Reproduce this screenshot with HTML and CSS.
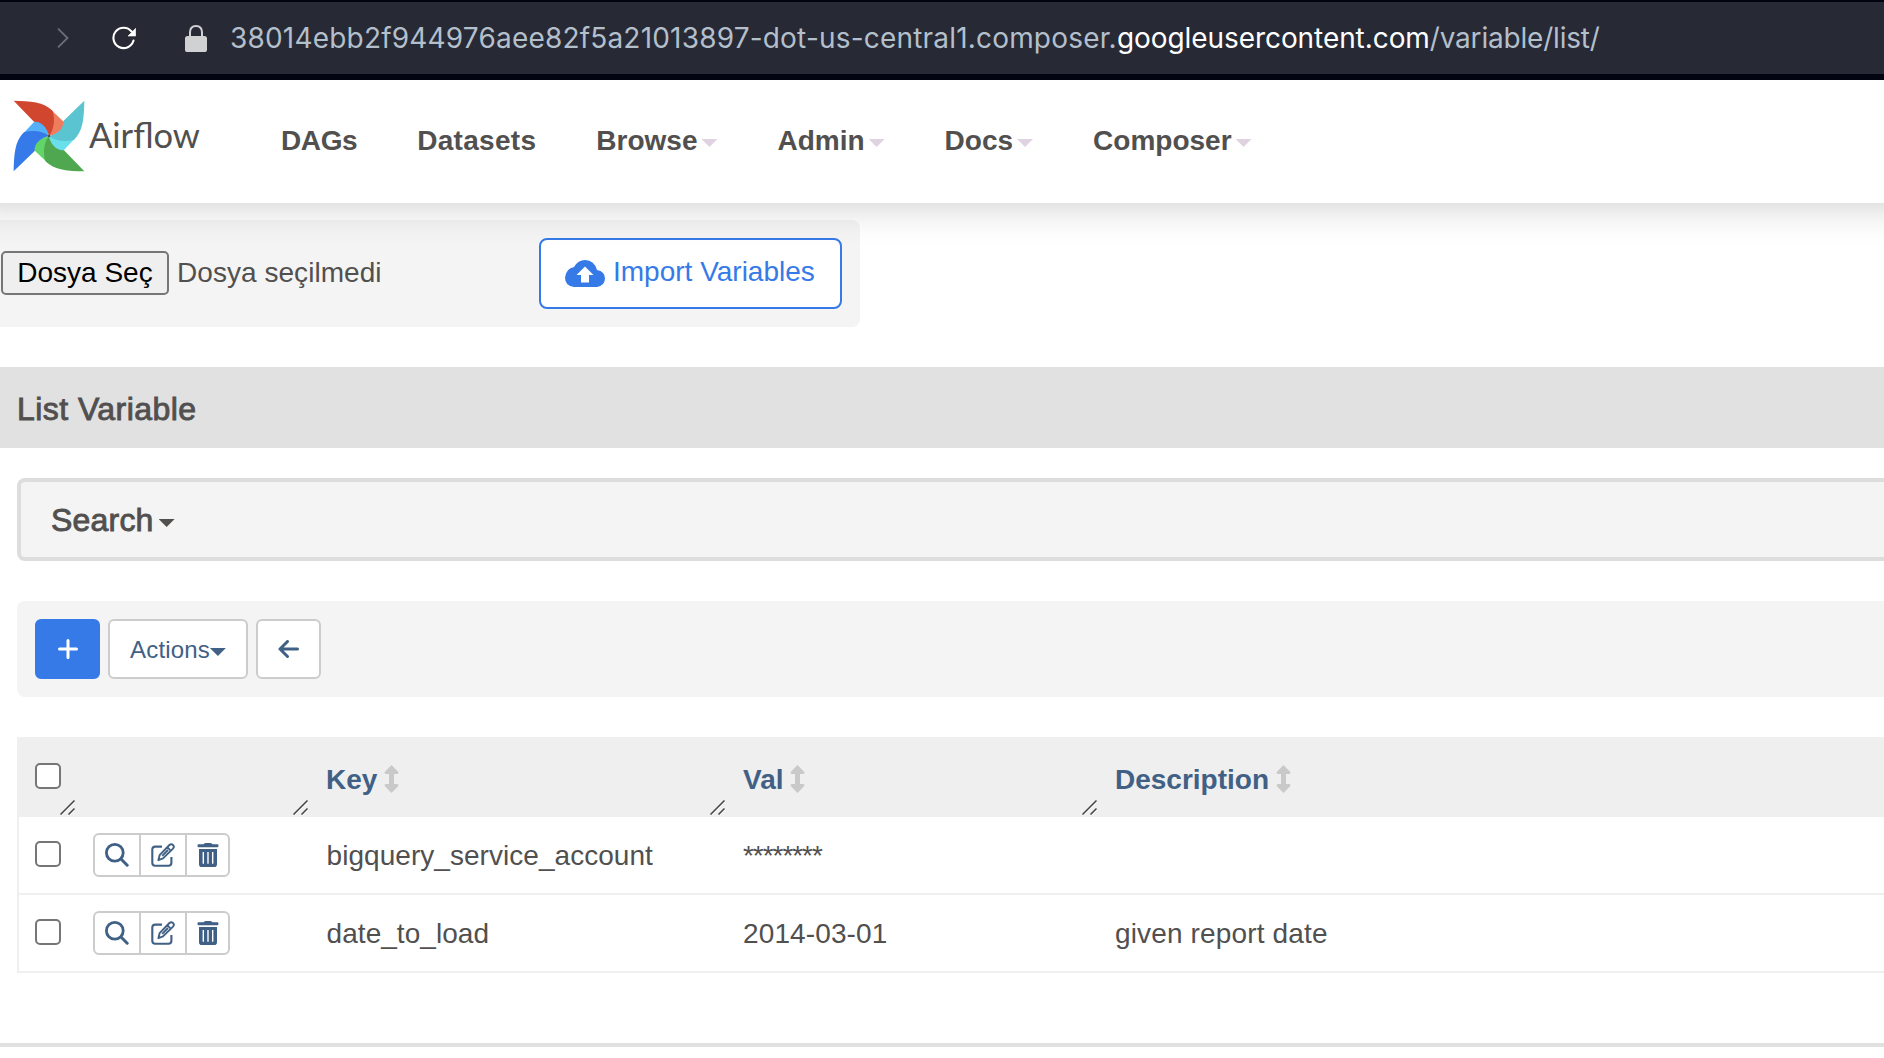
FILE: index.html
```html
<!DOCTYPE html>
<html lang="tr">
<head>
<meta charset="utf-8">
<title>List Variable - Airflow</title>
<link rel="stylesheet" href="styles.css">
</head>
<body>
<svg class="defs" aria-hidden="true">
  <symbol id="i-search" viewBox="0 0 24 24"><circle cx="9.8" cy="9.8" r="8.4" fill="none" stroke="currentColor" stroke-width="2.8"/><path d="M16 16l6.2 6.2" stroke="currentColor" stroke-width="3" stroke-linecap="round"/></symbol>
  <symbol id="i-edit" viewBox="0 0 24 24"><path d="M11 3.6H4.2Q1.3 3.6 1.3 6.5V19.8Q1.3 22.7 4.2 22.7H17.5Q20.4 22.7 20.4 19.8V14" fill="none" stroke="currentColor" stroke-width="2.1"/><path d="M7.4 17.2L8.6 12.2 18.4 2Q20.2 .4 22 2 23.700 3.800 22 5.600L12 15.400ZM16.300 4.200l3.600 3.600M11.200 12.800L17 7" fill="none" stroke="currentColor" stroke-width="1.9" stroke-linejoin="round"/></symbol>
  <symbol id="i-trash" viewBox="0 0 22 24"><path d="M1.500 1.300H6.500Q7.500 0 9 0H13Q14.500 0 15.500 1.300H20.500Q21.500 1.300 21.500 2.700T20.500 4.200H1.500Q.500 4.200 .500 2.700T1.500 1.300Z" fill="currentColor"/><path fill-rule="evenodd" d="M2 6H20V21.200Q20 24 17.200 24H4.800Q2 24 2 21.200ZM5.600 9V20.800H7V9ZM10.300 9V20.800H11.700V9ZM15 9V20.800H16.400V9Z" fill="currentColor"/></symbol>
  <symbol id="i-sort" viewBox="0 0 15 28"><path d="M7.500 0L14.300 7Q15 8.800 13 9H10V19H13Q15 19.200 14.300 21L7.500 28 .700 21Q0 19.200 2 19H5V9H2Q0 8.800 .700 7Z" fill="currentColor"/></symbol>
  <symbol id="i-grip" viewBox="0 0 15 15"><path d="M.5 14.500L14.500 .500M8.500 14.500L14.500 8.500" stroke="#444" stroke-width="1.500"/><path d="M2 15L15 2M10 15L15 10" stroke="#fff" stroke-width=".8"/></symbol>
</svg>

<header class="browser">
  <svg class="forward" viewBox="0 0 12 20"><path d="M1 .700L10.500 10 1 19.300" fill="none" stroke="#6c6e79" stroke-width="1.800"/></svg>
  <svg class="reload" viewBox="0 0 24 24"><path d="M21.500 14.500A10.200 10.200 0 1 1 19.600 5.500" fill="none" stroke="#fff" stroke-width="2.100" stroke-linecap="round"/><path d="M23.700 2.300V10H16Z" fill="#fff" stroke="#fff" stroke-width=".6"/></svg>
  <svg class="lock" viewBox="0 0 22 27"><path d="M5 13V7.500Q5 1 11 1T17 7.500V13" fill="none" stroke="#d0d1d3" stroke-width="2"/><rect y="11" width="22" height="16" rx="2.600" fill="#d0d1d3"/></svg>
  <div class="url">38014ebb2f944976aee82f5a21013897-dot-us-central1.composer.<span class="domain">googleusercontent.com</span><span class="path">/variable/list/</span></div>
</header>

<nav class="nav">
  <a class="brand">
    <svg class="pinwheel" viewBox="39 59 216 216">
      <g fill="#f07c5e"><path d="M150 85L192 125C194 150 165 165 147 167Z"/></g>
      <g transform="rotate(90 147 167)" fill="#68dfeb"><path d="M150 85L192 125C194 150 165 165 147 167Z"/></g>
      <g transform="rotate(180 147 167)" fill="#62d568"><path d="M150 85L192 125C194 150 165 165 147 167Z"/></g>
      <g transform="rotate(270 147 167)" fill="#53b0f9"><path d="M150 85L192 125C194 150 165 165 147 167Z"/></g>
      <g fill="#d0462f"><path d="M41 61C90 62 132 64 158 92C166 118 162 148 147 167C143 145 126 122 102 124Z"/></g>
      <g transform="rotate(90 147 167)" fill="#5bc4d1"><path d="M41 61C90 62 132 64 158 92C166 118 162 148 147 167C143 145 126 122 102 124Z"/></g>
      <g transform="rotate(180 147 167)" fill="#4fa850"><path d="M41 61C90 62 132 64 158 92C166 118 162 148 147 167C143 145 126 122 102 124Z"/></g>
      <g transform="rotate(270 147 167)" fill="#3679e8"><path d="M41 61C90 62 132 64 158 92C166 118 162 148 147 167C143 145 126 122 102 124Z"/></g>
      <circle cx="147" cy="167" r="4" fill="#51504f"/>
    </svg>
    <span class="brand-name">Airflow</span>
  </a>
  <ul class="menu">
    <li class="m-dags">DAGs</li>
    <li class="m-datasets">Datasets</li>
    <li class="m-browse">Browse<i class="caret"></i></li>
    <li class="m-admin">Admin<i class="caret"></i></li>
    <li class="m-docs">Docs<i class="caret"></i></li>
    <li class="m-composer">Composer<i class="caret"></i></li>
  </ul>
</nav>

<main>
  <form class="import">
    <button type="button" class="file-btn">Dosya Seç</button>
    <span class="file-status">Dosya seçilmedi</span>
    <button type="button" class="import-btn">
      <svg class="cloud" viewBox="0 0 40 27"><path fill-rule="evenodd" d="M9 27Q0 26 0 17.500Q1 8.500 9 7Q13 0 20 0Q29.500 .500 32 10Q40 11.500 40 18.500Q39.500 26 32 27ZM16 22.500H24V15H28.500L20 6.500 11.500 15H16Z" fill="currentColor"/></svg>
      <span>Import Variables</span>
    </button>
  </form>

  <h2 class="title"><span>List Variable</span></h2>

  <div class="content">
    <div class="search"><span>Search</span><i class="caret"></i></div>

    <div class="toolbar">
      <button class="btn primary"><svg class="plus" viewBox="0 0 20 20"><path d="M10 1.500V18.500M1.500 10H18.500" stroke="currentColor" stroke-width="3" stroke-linecap="round"/></svg></button>
      <button class="btn actions"><span>Actions</span><i class="caret"></i></button>
      <button class="btn back"><svg class="arrow" viewBox="0 0 21 18"><path d="M9.500 1.500L2 9l7.500 7.500M2 9H19.500" fill="none" stroke="currentColor" stroke-width="3" stroke-linecap="round" stroke-linejoin="round"/></svg></button>
    </div>

    <div class="table">
      <div class="row head">
        <div class="cell"><i class="check"></i><svg class="grip"><use href="#i-grip"/></svg></div>
        <div class="cell"><svg class="grip"><use href="#i-grip"/></svg></div>
        <div class="cell"><span class="t-key">Key</span><svg class="sort"><use href="#i-sort"/></svg><svg class="grip"><use href="#i-grip"/></svg></div>
        <div class="cell"><span class="t-val">Val</span><svg class="sort"><use href="#i-sort"/></svg><svg class="grip"><use href="#i-grip"/></svg></div>
        <div class="cell"><span class="t-desc">Description</span><svg class="sort"><use href="#i-sort"/></svg></div>
      </div>
      <div class="row">
        <div class="cell"><i class="check"></i></div>
        <div class="cell"><div class="group"><a><svg class="ic"><use href="#i-search"/></svg></a><a><svg class="ic"><use href="#i-edit"/></svg></a><a><svg class="ic trash"><use href="#i-trash"/></svg></a></div></div>
        <div class="cell"><span class="t-bq">bigquery_service_account</span></div>
        <div class="cell"><span class="t-stars">********</span></div>
        <div class="cell"></div>
      </div>
      <div class="row">
        <div class="cell"><i class="check"></i></div>
        <div class="cell"><div class="group"><a><svg class="ic"><use href="#i-search"/></svg></a><a><svg class="ic"><use href="#i-edit"/></svg></a><a><svg class="ic trash"><use href="#i-trash"/></svg></a></div></div>
        <div class="cell"><span class="t-load">date_to_load</span></div>
        <div class="cell"><span class="t-date">2014-03-01</span></div>
        <div class="cell"><span class="t-given">given report date</span></div>
      </div>
    </div>
  </div>
</main>
<footer class="footer"></footer>
</body>
</html>
```

FILE: styles.css
```css
* { box-sizing: border-box; }
body {
  margin: 0;
  height: 1058px;
  overflow: hidden;
  background: #fff;
  color: #51504f;
  font: 28px/40px "Liberation Sans", Arial, sans-serif;
  white-space: nowrap;
}
.defs { position: absolute; width: 0; height: 0; }
button { font: inherit; margin: 0; padding: 0; }
.caret {
  display: block;
  width: 16px;
  height: 8px;
  background: currentColor;
  clip-path: polygon(0 0, 100% 0, 50% 100%);
}

/* Browser bar */
.browser {
  position: relative;
  z-index: 2;
  height: 80px;
  display: flex;
  align-items: center;
  background: #272935;
  border-top: 2px solid #020412;
  border-bottom: 6px solid #020412;
}
.forward { width: 12px; height: 20px; margin-left: 57px; }
.reload { width: 24px; height: 24px; margin-left: 43px; }
.lock { width: 22px; height: 27px; margin: 0 23px 0 49px; }
.url {
  font: 400 28px/40px Inter, sans-serif;
  color: #b3bfcb;
  letter-spacing: .19px;
}
.domain { color: #fff; letter-spacing: -.07px; }
.path { letter-spacing: -.2px; }

/* Navigation */
.nav {
  position: relative;
  z-index: 1;
  height: 123px;
  display: flex;
  background: #fff;
  box-shadow: 0 -40px 38px 40px rgba(0, 0, 0, .22);
}
.brand { width: 281px; display: flex; padding: 20px 0 0 13px; }
.pinwheel { width: 72px; height: 72px; }
.brand-name { font: 34.5px/40px Lato, sans-serif; margin: 15px 0 0 4px; }
.menu {
  display: flex;
  gap: 60px;
  margin: 0;
  padding: 40px 0 0;
  list-style: none;
  font-weight: 700;
}
.menu li { display: flex; height: 40px; line-height: 41px; }
.menu .caret { color: #dfd2e1; margin: 19px 0 0 4px; }
.m-dags { letter-spacing: -.4px; }
.m-datasets { letter-spacing: .3px; }

/* Import form */
.import {
  width: 860px;
  height: 107px;
  margin-top: 17px;
  padding: 18px 18px 18px 1px;
  display: flex;
  align-items: center;
  background: #f4f4f4;
  border-radius: 0 8px 8px 0;
}
.file-btn {
  width: 168px;
  height: 44px;
  margin-bottom: 2px;
  border: 2px solid #767676;
  border-radius: 5px;
  background: #efefef;
  color: #000;
  line-height: 38px;
}
.file-status { margin: 0 0 2px 8px; letter-spacing: .05px; }
.import-btn {
  width: 303px;
  height: 71px;
  margin-left: auto;
  padding-left: 24px;
  display: flex;
  align-items: center;
  gap: 8px;
  border: 2px solid #367ae8;
  border-radius: 8px;
  background: #fff;
  color: #367ae8;
}
.import-btn span { margin-bottom: 3px; }
.cloud { width: 40px; height: 27px; margin-bottom: 1px; }

.title {
  height: 81px;
  margin: 40px 0 30px;
  padding-left: 17px;
  background: #e1e1e1;
  font-size: 32px;
  font-weight: 400;
  line-height: 84px;
  letter-spacing: .45px;
  -webkit-text-stroke: .9px;
}

.content { padding-left: 17px; }
.search {
  height: 83px;
  padding: 0 0 0 30px;
  display: flex;
  align-items: center;
  border: 4px solid #ddd;
  border-right: 0;
  border-radius: 8px 0 0 8px;
  background: #f4f4f4;
  font-size: 32px;
  letter-spacing: .2px;
  -webkit-text-stroke: .9px;
}
.search .caret { margin: 7px 0 0 5px; }

.toolbar {
  height: 96px;
  margin: 40px 0;
  padding: 18px;
  display: flex;
  gap: 8px;
  background: #f4f4f4;
  border-radius: 8px 0 0 8px;
}
.btn {
  width: 65px;
  height: 60px;
  display: flex;
  align-items: center;
  justify-content: center;
  border: 2px solid #ccc;
  border-radius: 6px;
  background: #fff;
  color: #416085;
  font-size: 24px;
}
.primary { border-color: #367ae8; background: #367ae8; color: #fff; }
.actions { width: 140px; letter-spacing: .15px; }
.actions span { margin-top: 1px; }
.actions .caret { margin-top: 6px; }
.plus { width: 20px; height: 20px; }
.arrow { width: 21px; height: 18px; }

/* Variable table */
.table { border-left: 2px solid #efefef; }
.row {
  height: 78px;
  display: grid;
  grid-template-columns: 58px 233px 417px 372px 1fr;
  border-bottom: 2px solid #efefef;
}
.cell { position: relative; display: flex; align-items: center; padding-left: 16px; }
.cell > span { margin-top: 1px; }
.head { height: 80px; background: #efefef; border: 0; color: #416085; font-weight: 700; }
.head .cell > span { margin-top: 6px; }
.check {
  width: 26px;
  height: 26px;
  border: 2px solid #767676;
  border-radius: 5px;
  background: #fff;
  margin-top: -2px;
}
.sort { width: 15px; height: 28px; margin: 3px 0 0 7px; color: #c9c9c9; }
.grip { position: absolute; right: 2px; bottom: 2px; width: 15px; height: 15px; }
.group {
  width: 137px;
  height: 44px;
  display: grid;
  grid-template-columns: 44px 46px 1fr;
  border: 2px solid #ccc;
  border-radius: 6px;
  color: #416085;
}
.group a { display: flex; align-items: center; justify-content: center; }
.group a + a { border-left: 2px solid #ccc; }
.ic { width: 24px; height: 24px; }
.trash { width: 22px; }
.t-bq, .t-load { padding-left: .6px; letter-spacing: .04px; }
.t-stars { letter-spacing: -1.05px; }
.t-date { letter-spacing: .12px; }
.t-given { letter-spacing: .15px; }

.footer { margin-top: 70px; height: 4px; background: #e1e1e1; }
```
